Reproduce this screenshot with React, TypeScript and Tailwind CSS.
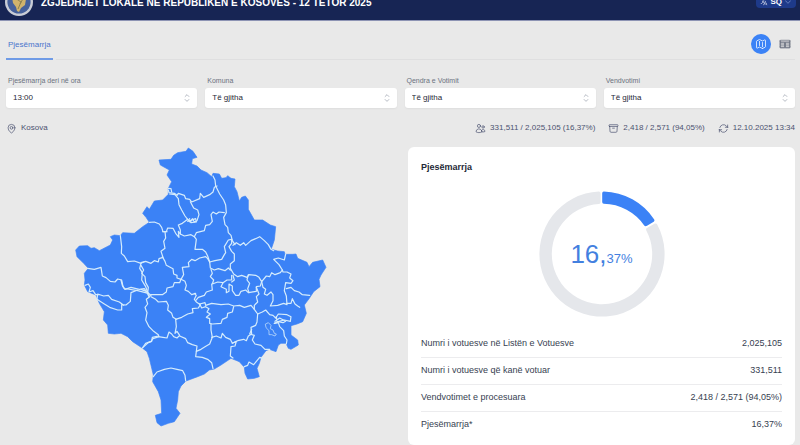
import {
  HiChevronDown,
  HiLanguage,
  HiOutlineArchiveBox,
  HiOutlineArrowPath,
  HiOutlineChevronUpDown,
  HiOutlineMap,
  HiOutlineMapPin,
  HiOutlineTableCells,
  HiOutlineUsers,
} from "react-icons/hi2";

const filters = [
  { id: "hour", label: "Pjesëmarrja deri në ora", value: "13:00" },
  { id: "municipality", label: "Komuna", value: "Të gjitha" },
  { id: "center", label: "Qendra e Votimit", value: "Të gjitha" },
  { id: "station", label: "Vendvotimi", value: "Të gjitha" },
];

const stats = [
  { icon: HiOutlineUsers, text: "331,511 / 2,025,105 (16,37%)" },
  { icon: HiOutlineArchiveBox, text: "2,418 / 2,571 (94,05%)" },
  { icon: HiOutlineArrowPath, text: "12.10.2025 13:34" },
];

const rows = [
  { label: "Numri i votuesve në Listën e Votuesve", value: "2,025,105" },
  { label: "Numri i votuesve që kanë votuar", value: "331,511" },
  { label: "Vendvotimet e procesuara", value: "2,418 / 2,571 (94,05%)" },
  { label: "Pjesëmarrja*", value: "16,37%" },
];

const outline =
  "M264 60 300 58 308 46 320 38 345 34 352 24 366 34 378 52 364 56 362 72 378 78 390 90 408 98 422 110 426 100 445 102 452 115 465 113 470 107 480 115 492 117 490 140 498 155 505 183 512 172 523 168 532 180 532 208 550 240 575 240 598 255 614 260 610 300 604 318 600 328 620 333 640 335 642 343 665 343 675 342 680 355 708 367 714 380 725 367 755 360 765 382 750 405 744 418 747 440 728 455 715 475 700 495 706 520 695 545 678 552 660 557 660 585 680 600 682 615 660 628 652 625 645 610 630 610 622 615 615 635 595 628 585 632 570 652 565 670 558 685 565 710 550 715 530 717 522 700 520 682 505 665 480 655 450 675 430 687 415 690 400 702 380 710 345 723 330 738 322 755 320 780 315 805 327 820 310 845 292 850 270 858 258 848 253 826 272 820 270 780 262 755 245 725 247 705 235 655 228 635 215 625 185 605 170 590 150 580 130 582 112 580 110 555 97 540 100 515 85 490 75 465 50 455 40 435 42 420 40 400 52 385 38 370 18 350 14 330 25 318 50 317 60 325 70 323 85 332 118 315 125 300 118 290 130 285 148 287 155 278 190 280 215 260 235 247 225 232 215 220 228 200 235 208 250 183 275 180 292 163 292 145 302 125 288 105 295 90 268 75Z";

const westBorders = [
  "M292 145 300 146 302 156",
  "M148 287 152 320 151 340 160 348 170 365 190 363 210 370 220 365",
  "M235 247 250 246 265 252 272 262 276 275 288 275",
  "M50 385 70 388 90 382 94 408 105 413 118 424 132 426 140 417 152 420 156 440 162 448 180 442 205 448 220 446 226 454",
  "M210 370 206 385 214 398 212 420 224 440 230 456 234 464",
  "M150 420 154 436 160 446 170 447 200 452 232 460",
  "M200 450 180 458 178 484 165 495 152 494 152 510 140 510 116 502 100 492 78 478 80 462 98 468 112 466 122 478 145 486 158 496",
  "M42 436 52 432 58 442 54 456 66 452 74 464 84 464",
  "M216 622 232 608 242 604 244 592 262 588",
  "M247 710 258 696 280 688 300 684 318 688 335 692 342 706 344 723",
];

// Offset by (210, 120) from the outline's origin.
const centralBorders = [
  "M82 30 84 38 100 40 108 46 112 40 130 46 134 56 146 58 152 66 176 56 178 40 188 52 206 44 216 36 220 22 228 18",
  "M216 -12 222 0 224 18 236 42 248 60 254 75 256 98 248 112 252 134 260 142 262 158 270 166 274 182 282 194",
  "M86 42 102 44 112 56 114 74 122 90 132 108 140 118",
  "M140 118 148 127 154 116 160 126 168 122 174 104 170 90 158 84 148 65",
  "M146 116 140 124 164 116 166 126 150 128",
  "M140 118 124 130 112 135 118 150 118 162 130 168 150 164 160 170",
  "M65 155 76 155 80 144 96 145 104 160 114 172 112 154 118 162",
  "M160 170 166 158 190 152 194 136 206 134 214 124 210 104 216 96 226 102 234 96 250 98",
  "M72 155 74 174 68 184 72 205 60 214 66 232 54 236 52 246 40 242 30 250 14 244 0 248",
  "M160 170 166 178 162 208 184 208 194 216 200 228 206 246",
  "M64 230 72 244 76 256 96 266 98 282 108 286 108 294 120 298 128 284 124 262 144 260 142 248 152 238 162 242 176 234 194 230 200 236 206 246",
  "M206 246 222 242 242 238 250 224 254 218 250 200 262 180 272 178",
  "M272 178 272 190 264 200 272 214 280 222 280 242 268 252 268 265 278 282 290 290 302 286 318 292 324 284 344 286 354 292 362 305 376 288 386 290 392 278 402 284 418 278 424 270 414 254 398 238 412 234 430 240 434 222",
  "M276 196 286 188 298 196 308 188 314 196 330 182 344 176 356 170 370 182 382 194 390 208 398 212",
  "M206 246 208 264 220 270 232 266 252 272 262 264 268 270",
  "M210 268 214 280 208 290 218 300 214 312 230 306 246 308 258 300 272 300 272 286",
  "M120 298 132 304 136 316 132 330 142 334 152 344 164 340",
  "M164 362 172 352 190 346 196 336 214 330 212 312",
  "M246 308 240 320 256 328 256 338 264 334 264 312 274 318 274 332 284 346 294 346 300 334 314 330 322 338 346 334 346 320 358 318 362 305",
  "M276 286 280 300 272 306",
  "M322 284 318 300 326 310 320 326 324 338",
  "M120 298 116 308 100 308 96 320 78 324 76 336 64 344 30 344 24 350 16 334 0 328",
  "M0 256 8 270 2 280 12 290 14 308 22 322 20 338 30 346",
  "M26 350 16 358 20 372 12 382 18 398 14 420 24 440 38 454 52 464 54 470 36 476 30 484 14 490 4 504",
  "M30 350 44 358 52 366 76 364 82 376 80 390 92 400 96 412 106 418",
  "M52 470 66 472 78 474 84 456 92 462 98 470 108 474 116 466 108 454 102 460 106 440 104 418 122 412 140 402 156 398 154 386 172 384 178 374 166 366 160 358 166 346 160 340",
  "M176 372 192 368 194 376 212 370 240 374 262 372 278 378 296 376 310 382 330 376 340 388",
  "M176 372 182 384 194 380 204 386 198 396 208 402 196 412 206 416 206 430 214 432 240 430 244 418 258 412 260 400 274 396 278 380",
  "M210 432 210 450 214 472 206 492 192 500 180 508 166 514 168 498 154 494 140 488 134 476 116 468",
  "M212 472 226 468 240 474 244 460 254 472 268 478 274 490 286 484 282 498 270 500 268 528 276 534",
  "M274 490 290 482 308 478 316 482 322 468 332 462 330 442 344 436 348 426 350 402 340 388 340 376 350 366 346 350 354 342 346 322",
  "M350 402 364 396 374 390 386 404 396 406 404 414 412 402 438 404 450 410 448 424 430 420 414 424 400 430",
  "M406 410 408 424 426 428 434 424 416 414 402 424",
  "M362 305 366 322 374 328 370 342 378 346 390 336 396 344 396 362 388 378 410 376 428 370 438 374 436 348 430 332 434 308 450 310 456 302 446 294 450 282 438 276 426 276 424 270",
  "M436 326 450 322 460 332 474 336 484 344 506 346",
  "M438 370 450 370 454 356 462 372 470 378 476 382",
  "M400 430 412 428 416 440 428 452 430 468 438 480 436 492",
  "M332 448 326 462 340 466 334 480 342 492 360 496 372 508 386 508",
  "M310 560 320 556 324 546 338 554 348 542 356 532 366 536",
  "M166 514 164 530 184 532 200 538 212 548 216 566",
];

function KosovoMap() {
  return (
    <svg viewBox="0 21 795 849" className="w-[265px]" role="img" aria-label="Kosova">
      <path d={outline} fill="#3b82f6" stroke="#3b82f6" strokeWidth="2" strokeLinejoin="round" />
      <g fill="none" stroke="#d5ecfc" strokeWidth="3.6" strokeLinejoin="round" strokeLinecap="round">
        {westBorders.map((d) => (
          <path key={d} d={d} />
        ))}
        <g transform="translate(210 120)">
          {centralBorders.map((d) => (
            <path key={d} d={d} />
          ))}
          <path
            d="M374 432 382 428 390 436 388 446 396 450 400 460 406 462 402 468 392 464 384 464 384 452 376 444Z"
            strokeWidth="2"
          />
        </g>
      </g>
    </svg>
  );
}

function TurnoutDonut() {
  return (
    <div className="relative mx-auto w-[126px]">
      <svg viewBox="-63 -63 126 126" className="w-full" aria-hidden>
        <path
          d="M55.2 -29.5A62.6 62.6 0 1 1 -3.2 -62.5Q-1.4 -62.5 -1.4 -60.8V-51.8Q-1.4 -50.2 -3 -50.1A50.2 50.2 0 1 0 44.3 -23.6Q43.6 -25.2 45 -26L52.8 -30.4Q54.5 -31 55.2 -29.5Z"
          fill="#e5e7eb"
        />
        <path
          d="M1.8 -62.6A62.6 62.6 0 0 1 52.2 -34.6Q53 -33.2 51.7 -32.3L45 -28.2Q43.4 -27.2 42.2 -28.6A50.2 50.2 0 0 0 1.8 -50.2Q0.2 -50.4 0.2 -52V-60.8Q0.2 -62.6 1.8 -62.6Z"
          fill="#3b82f6"
        />
      </svg>
      <p className="absolute inset-0 flex items-center justify-center text-[#4380df]">
        <span>
          <span className="text-[26px]">16,</span>
          <span className="text-[13px]">37%</span>
        </span>
      </p>
    </div>
  );
}

function Emblem() {
  return (
    <svg viewBox="0 0 28 28" className="size-7" aria-hidden>
      <circle cx="14" cy="14" r="14" fill="#c9cdd6" />
      <circle cx="14" cy="14" r="11.6" fill="#44609c" />
      <path d="M7 9 12 5 18 6 21 11 20 17 16 20 14 24 12 23 11 19 8 15Z" fill="#d0b36c" />
      <path d="M10 10 16 14 13 21M19 9 15 16" stroke="#8b8052" fill="none" />
    </svg>
  );
}

export default function App() {
  return (
    <div className="overflow-hidden bg-[#e9e9e9] pb-px font-['Liberation_Sans',Arial,sans-serif] text-[#374151]">
      <header className="-mt-4 flex h-[37px] items-center border-b border-[#8d94b4] bg-[#172554] pr-1 pl-[5px] text-white">
        <Emblem />
        <h1 className="ml-2 text-[10px] font-bold whitespace-nowrap">
          ZGJEDHJET LOKALE NË REPUBLIKËN E KOSOVËS - 12 TETOR 2025
        </h1>
        <button
          type="button"
          className="ml-auto flex h-3 items-center gap-0.5 rounded-sm bg-[#1e3a8a] px-1 text-[8px] font-bold"
        >
          <HiLanguage className="size-2" />
          SQ
          <HiChevronDown className="size-2 text-[#7f95cf]" />
        </button>
      </header>

      <main className="pr-[5px] pl-1.5">
        <div className="flex h-[39px] items-stretch">
          <nav className="flex">
            <a
              href="#pjesemarrja"
              className="flex items-center border-b-2 border-[#6f9be6] px-0.5 pt-2.5 text-[8px] text-[#4a74cc]"
            >
              Pjesëmarrja
            </a>
          </nav>
          <div className="ml-[3px] flex flex-1 items-center justify-end gap-1 border-b border-[#dfdfe0] pt-2">
            <button
              type="button"
              aria-label="Harta"
              className="flex size-5 items-center justify-center rounded-full bg-[#3b82f6] text-white"
            >
              <HiOutlineMap className="size-3" />
            </button>
            <button
              type="button"
              aria-label="Tabela"
              className="flex size-5 items-center justify-center rounded-full text-[#6b7280]"
            >
              <HiOutlineTableCells className="size-3" />
            </button>
          </div>
        </div>

        <form className="mt-4 grid grid-cols-4 gap-2">
          {filters.map((f) => (
            <div key={f.id}>
              <label htmlFor={f.id} className="block px-0.5 text-[7px] leading-[10px] text-[#6b7280]">
                {f.label}
              </label>
              <div className="relative mt-0.5">
                <select
                  id={f.id}
                  className="block h-5 w-full appearance-none rounded-[3px] bg-white px-[7px] text-[8px] text-[#1f2937] shadow-xs"
                >
                  <option>{f.value}</option>
                </select>
                <HiOutlineChevronUpDown className="pointer-events-none absolute top-1 right-1 size-3 text-[#9ca3af]" />
              </div>
            </div>
          ))}
        </form>

        <div className="mt-3 flex h-4 items-center gap-[13px] text-[8px] text-[#4b5270]">
          <p className="mr-auto flex items-center gap-1">
            <HiOutlineMapPin className="size-[11px]" />
            Kosova
          </p>
          {stats.map(({ icon: Icon, text }) => (
            <p key={text} className="flex items-center gap-1">
              <Icon className="size-[11px]" />
              {text}
            </p>
          ))}
        </div>

        <div className="mt-[11px] grid grid-cols-[1fr_387px] gap-[7px]">
          <div className="flex items-start justify-center">
            <KosovoMap />
          </div>
          <section className="rounded-md bg-white px-[13px] pt-3.5 pb-[7px]">
            <h2 className="text-[9px] leading-3 font-bold text-[#1f2937]">Pjesëmarrja</h2>
            <div className="mt-[18px]">
              <TurnoutDonut />
            </div>
            <table className="mt-[13px] w-full text-[9px] text-[#374151]">
              <tbody>
                {rows.map((r) => (
                  <tr key={r.label} className="h-[27px] border-b border-[#ececee] last:border-0">
                    <th scope="row" className="text-left font-normal">
                      {r.label}
                    </th>
                    <td className="text-right">{r.value}</td>
                  </tr>
                ))}
              </tbody>
            </table>
          </section>
        </div>
      </main>
    </div>
  );
}
